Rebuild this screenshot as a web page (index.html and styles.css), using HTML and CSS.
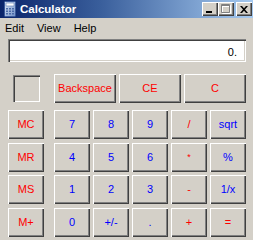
FILE: index.html
```html
<!DOCTYPE html>
<html>
<head>
<meta charset="utf-8">
<link rel="stylesheet" href="styles.css">
</head>
<body>
<div class="window">
  <div class="titlebar">
    <svg class="appicon" width="14" height="17" viewBox="0 0 14 17">
      <defs>
        <linearGradient id="g" x1="0" y1="0" x2="1" y2="1">
          <stop offset="0" stop-color="#dfe9f7"/>
          <stop offset="1" stop-color="#6f8fc8"/>
        </linearGradient>
      </defs>
      <rect x="1.5" y="0.5" width="11" height="15" rx="1" fill="url(#g)" stroke="#3b5a9a"/>
      <rect x="3" y="2" width="8" height="3" fill="#ffffff" stroke="#5a78b0" stroke-width="0.6"/>
      <g fill="#4a6aa8">
        <rect x="3" y="7" width="2" height="1.5"/><rect x="6" y="7" width="2" height="1.5"/><rect x="9" y="7" width="2" height="1.5"/>
        <rect x="3" y="9.5" width="2" height="1.5"/><rect x="6" y="9.5" width="2" height="1.5"/><rect x="9" y="9.5" width="2" height="1.5"/>
        <rect x="3" y="12" width="2" height="1.5"/><rect x="6" y="12" width="2" height="1.5"/><rect x="9" y="12" width="2" height="1.5"/>
      </g>
    </svg>
    <span class="title">Calculator</span>
    <div class="caps">
      <div class="cap"><svg width="8" height="7" viewBox="0 0 8 7"><rect x="0" y="5" width="6" height="2" fill="#000"/></svg></div>
      <div class="cap"><svg width="10" height="10" viewBox="0 0 10 10"><path d="M1.5 1.5h8v8h-8z M1.5 2.5h8" fill="none" stroke="#fff"/><path d="M0.5 0.5h8v8h-8z M0.5 1.5h8" fill="none" stroke="#808080"/></svg></div>
      <div class="cap close"><svg width="8" height="7" viewBox="0 0 8 7"><path d="M0 0h2l2 2.2L6 0h2L5 3.5 8 7H6L4 4.8 2 7H0l3-3.5z" fill="#000"/></svg></div>
    </div>
  </div>
  <div class="menubar">
    <span class="menu">Edit</span>
    <span class="menu">View</span>
    <span class="menu">Help</span>
  </div>
  <div class="display">0.</div>
  <div class="keypad">
    <div class="row top">
      <div class="memcell"><div class="membox"></div></div>
      <div class="wide">
        <div class="btn red">Backspace</div>
        <div class="btn red">CE</div>
        <div class="btn red">C</div>
      </div>
    </div>
    <div class="row r1">
      <div class="btn red mem">MC</div>
      <div class="keys">
        <div class="btn blue">7</div><div class="btn blue">8</div><div class="btn blue">9</div><div class="btn red">/</div><div class="btn blue">sqrt</div>
      </div>
    </div>
    <div class="row r2">
      <div class="btn red mem">MR</div>
      <div class="keys">
        <div class="btn blue">4</div><div class="btn blue">5</div><div class="btn blue">6</div><div class="btn red star">*</div><div class="btn blue">%</div>
      </div>
    </div>
    <div class="row r3">
      <div class="btn red mem">MS</div>
      <div class="keys">
        <div class="btn blue">1</div><div class="btn blue">2</div><div class="btn blue">3</div><div class="btn red">-</div><div class="btn blue">1/x</div>
      </div>
    </div>
    <div class="row r4">
      <div class="btn red mem">M+</div>
      <div class="keys">
        <div class="btn blue">0</div><div class="btn blue">+/-</div><div class="btn blue">.</div><div class="btn red">+</div><div class="btn red">=</div>
      </div>
    </div>
  </div>
</div>
</body>
</html>
```

FILE: styles.css
```css
html, body {
  margin: 0;
  padding: 0;
  background: #D4D0C8;
}
.window {
  width: 253px;
  height: 240px;
  background: #D4D0C8;
  font-family: "Liberation Sans", Arial, sans-serif;
  font-size: 11px;
  overflow: hidden;
}
.titlebar {
  height: 18px;
  display: flex;
  align-items: center;
  background: linear-gradient(to right, #0A246A 0%, #3a5f9c 40%, #A6CAF0 100%);
}
.appicon {
  margin-left: 3px;
  margin-right: 3px;
  flex: none;
}
.title {
  color: #fff;
  font-weight: bold;
  font-size: 11.5px;
  flex: 1;
}
.caps {
  display: flex;
  margin-right: 1px;
  align-self: flex-start;
  margin-top: 2px;
}
.cap {
  width: 16px;
  height: 14px;
  box-sizing: border-box;
  background: #D4D0C8;
  box-shadow: inset 1px 1px #fff, inset -1px -1px #404040, inset -2px -2px #808080;
  display: flex;
  align-items: center;
  justify-content: center;
}
.cap.close {
  margin-left: 2px;
}
.menubar {
  height: 19px;
  display: flex;
  align-items: center;
  padding-left: 5px;
  gap: 13px;
  color: #000;
}
.display {
  margin: 2px 0 0 8px;
  width: 238px;
  height: 23px;
  box-sizing: border-box;
  background: #fff;
  box-shadow: inset 1px 1px #808080, inset 2px 2px #404040, inset -1px -1px #fff, inset -2px -2px #D4D0C8;
  text-align: right;
  padding: 7px 9px 0 0;
  line-height: 12px;
}
.keypad {
  margin: 12px 0 0 8px;
  display: flex;
  flex-direction: column;
}
.row {
  display: flex;
  gap: 10px;
}
.row.r1 { margin-top: 7px; }
.row.r2 { margin-top: 4px; }
.row.r3 { margin-top: 3px; }
.row.r4 { margin-top: 4px; }
.memcell {
  width: 36px;
  height: 29px;
  display: flex;
  align-items: center;
  justify-content: center;
}
.membox {
  width: 27px;
  height: 27px;
  box-sizing: border-box;
  box-shadow: inset 1px 1px #808080, inset 2px 2px #404040, inset -1px -1px #fff, inset -2px -2px #D4D0C8;
}
.wide {
  display: flex;
  gap: 3px;
}
.wide .btn {
  width: 62px;
}
.keys {
  display: flex;
  gap: 3px;
}
.btn {
  width: 36px;
  height: 29px;
  box-sizing: border-box;
  background: #D4D0C8;
  box-shadow: inset 1px 1px #fff, inset -1px -1px #404040, inset -2px -2px #808080;
  display: flex;
  align-items: center;
  justify-content: center;
  font-size: 11px;
  padding-bottom: 1px;
}
.red { color: #ff0000; }
.blue { color: #0000ff; }
.star { font-size: 9px; }
```
